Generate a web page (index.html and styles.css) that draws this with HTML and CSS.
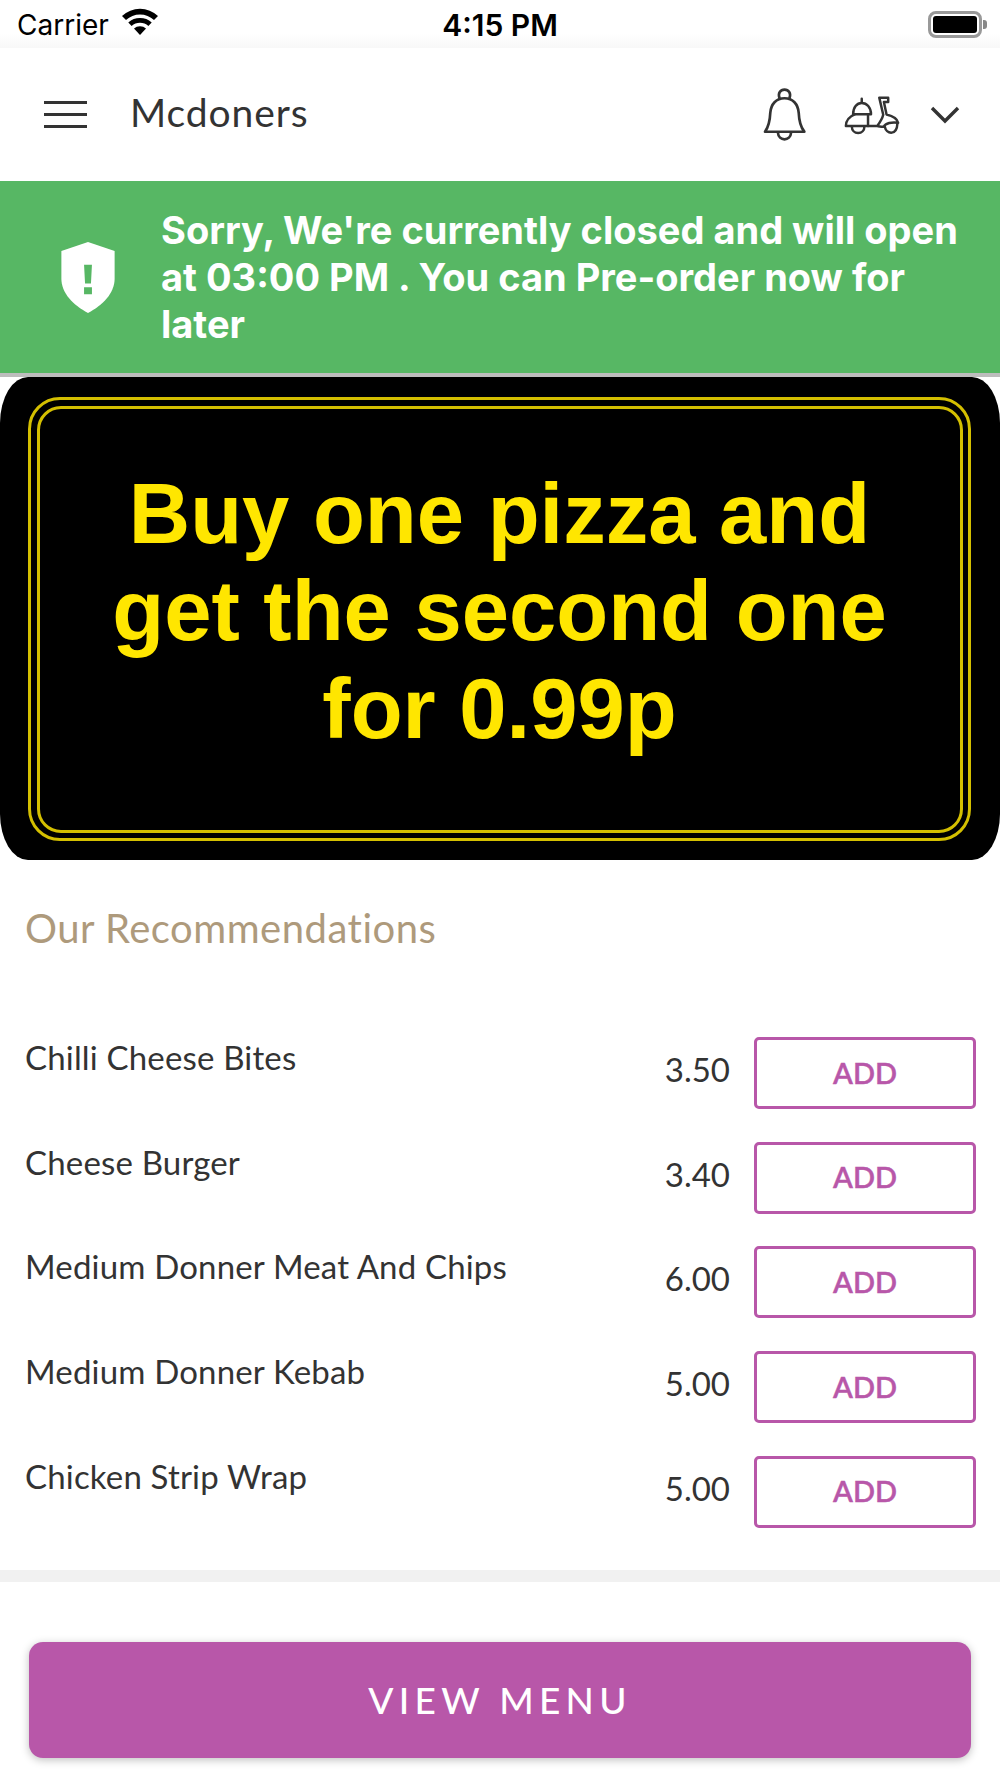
FILE: index.html
```html
<!DOCTYPE html>
<html lang="en">
<head>
<meta charset="utf-8">
<title>Mcdoners</title>
<link rel="stylesheet" href="styles.css">
</head>
<body>
<div class="app">
  <div class="status">
    <div class="status-left">
      <span class="carrier">Carrier</span>
      <svg class="wifi" viewBox="0 0 38 28"><path d="M19 27 13 20.5a9 9 0 0 1 12 0Z"/><path d="M10.6 18 7.3 14.4a17.500 17.500 0 0 1 23.400 0L27.400 18a12.500 12.500 0 0 0-16.800 0Z"/><path d="M5 12 1 8a26 26 0 0 1 36 0l-4 4a20.500 20.500 0 0 0-28 0Z"/></svg>
    </div>
    <span class="time">4:15 PM</span>
    <div class="status-right">
      <span class="battery"><span class="battery-fill"></span></span>
      <span class="battery-nub"></span>
    </div>
  </div>

  <header class="nav">
    <div class="burger"><span></span><span></span><span></span></div>
    <div class="title">Mcdoners</div>
    <svg class="bell" viewBox="190 258 130 164" fill="none" stroke="#333" stroke-width="8" stroke-linejoin="round" stroke-linecap="round">
      <path d="M196 392H315C302 376 299 358 298 335 296 308 280 291 255 291 230 291 214 308 212 335 211 358 208 376 196 392Z"/>
      <path d="M240 291C234 275 243 265 255 265 267 265 276 275 270 291"/>
      <path d="M235 394C236 408 245 415 255 415 265 415 274 408 275 394"/>
    </svg>
    <svg class="scooter" viewBox="433 288 168 118" fill="none" stroke="#333" stroke-width="7.500" stroke-linejoin="round" stroke-linecap="round">
      <path d="M460 343C460 322 471 309 486 309 501 309 514 322 514 343Z"/>
      <path d="M486 304V296"/>
      <path d="M466 343C449 350 438 362 438 379H505V343"/>
      <path d="M505 379H533C541 368 548 358 551 345L539 293H566V306H553L561 344C577 348 593 354 596 369 577 366 558 370 552 381 546 381 540 380 533 379"/>
      <path d="M456 380C456 392 464 400 475 400 486 400 494 392 494 380"/>
      <path d="M556 382C558 392 566 399 575 399 586 399 593 391 594 370"/>
    </svg>
    <svg class="chevron" viewBox="0 0 30 19" fill="none" stroke="#333" stroke-width="3.400"><path d="M2 2 15 15 28 2"/></svg>
  </header>

  <section class="alert">
    <svg class="shield" viewBox="0 0 54 72"><path fill="#fff" d="M27 0 54 9V37C54 52 42 64 27 72 12 64 0 52 0 37V9Z"/><path fill="#57b764" d="M23 23H31L30 42H24ZM23 46H31V53H23Z"/></svg>
    <p class="alert-text">Sorry, We're currently closed and will open at 03:00 PM . You can Pre-order now for later</p>
  </section>

  <section class="promo">
    <div class="promo-line-outer">
      <div class="promo-line-inner">
        <p class="promo-text">Buy one pizza and<br>get the second one<br>for 0.99p</p>
      </div>
    </div>
  </section>

  <section class="recs">
    <h2 class="recs-title">Our Recommendations</h2>
    <div class="row"><span class="item-name">Chilli Cheese Bites</span><span class="item-price">3.50</span><span class="add">ADD</span></div>
    <div class="row"><span class="item-name">Cheese Burger</span><span class="item-price">3.40</span><span class="add">ADD</span></div>
    <div class="row"><span class="item-name">Medium Donner Meat And Chips</span><span class="item-price">6.00</span><span class="add">ADD</span></div>
    <div class="row"><span class="item-name">Medium Donner Kebab</span><span class="item-price">5.00</span><span class="add">ADD</span></div>
    <div class="row"><span class="item-name">Chicken Strip Wrap</span><span class="item-price">5.00</span><span class="add">ADD</span></div>
  </section>

  <div class="divider"></div>

  <div class="cta-wrap"><div class="cta">VIEW MENU</div></div>
</div>
</body>
</html>
```
FILE: styles.css
```css
* { box-sizing: border-box; }
html, body { margin: 0; padding: 0; background: #fff; }
.app { width: 1000px; height: 1778px; overflow: hidden; font-family: Lato, "Open Sans", sans-serif; color: #333; }

.status {
  height: 48px;
  display: grid;
  grid-template-columns: 1fr auto 1fr;
  align-items: center;
  padding: 2px 13px 0 17px;
  background: linear-gradient(#fff 70%, #f8f8f8);
  font-family: Inter, Roboto, sans-serif;
  color: #000;
}
.status-left { display: flex; align-items: center; gap: 12px; }
.carrier { font-size: 28px; font-weight: 400; }
.wifi { width: 38px; height: 28px; margin-top: -6px; }
.time { font-size: 30px; font-weight: 600; position: relative; left: -2px; }
.status-right { display: flex; align-items: center; justify-content: flex-end; gap: 1px; margin-top: -2px; }
.battery { width: 54px; height: 27px; border: 3px solid #999; border-radius: 8px; padding: 2px; display: block; }
.battery-fill { display: block; height: 100%; background: #000; border-radius: 3px; }
.battery-nub { width: 4px; height: 9px; background: #888; border-radius: 0 3px 3px 0; }

.nav { height: 133px; display: flex; align-items: center; padding: 0 40px 0 44px; }
.burger { width: 43px; display: flex; flex-direction: column; gap: 8.500px; }
.burger span { height: 3.500px; background: #333; display: block; }
.title { font-size: 39px; letter-spacing: 0.9px; margin-left: 43px; margin-top: -6px; flex: 1; }
.bell { width: 43px; height: 55px; margin-right: 38px; }
.scooter { width: 56px; height: 39px; margin-right: 30px; margin-top: 2px; }
.chevron { width: 30px; height: 19px; margin-top: 1px; }

.alert {
  height: 192px;
  background: #57b764;
  box-shadow: 0 4px 0 #bdbdbd;
  display: flex;
  align-items: center;
  padding-left: 61px;
  position: relative;
  color: #fff;
}
.shield { width: 54px; height: 71px; flex: none; margin-top: 1px; }
.alert-text {
  margin: 0 0 0 46px;
  font-family: Inter, Roboto, sans-serif;
  font-size: 38px;
  line-height: 47px;
  font-weight: 700;
  width: 825px;
}

.promo {
  margin-top: 4px;
  height: 483px;
  background: #000;
  border-radius: 28px / 46px;
  padding: 20px 29px 19px 28px;
}
.promo-line-outer { height: 100%; border: 3px solid #d4bf00; border-radius: 32px; padding: 5.500px; filter: blur(0.7px); }
.promo-line-inner { height: 100%; border: 3px solid #d4bf00; border-radius: 24px; display: flex; align-items: center; justify-content: center; }
.promo-text {
  margin: -16px 0 0;
  font-family: "Liberation Sans", Arial, sans-serif;
  font-weight: 700;
  font-size: 85px;
  line-height: 97.500px;
  text-align: center;
  color: #ffe600;
  filter: blur(0.5px);
}

.recs { padding: 45px 25px 0; height: 710px; }
.recs-title { margin: 0 0 86px; font-size: 40px; letter-spacing: 0.5px; line-height: 46px; font-weight: 400; color: #ae9a7c; }
.row { display: flex; height: 72px; margin-bottom: 32.700px; }
.item-name { flex: 1; font-size: 33px; letter-spacing: 0.17px; line-height: 40px; }
.item-price { font-size: 33px; line-height: 65px; margin-right: 24px; }
.add {
  width: 222px;
  height: 72px;
  margin-right: -1px;
  border: 3px solid #b857a9;
  border-radius: 5px;
  color: #b857a9;
  font-size: 29px;
  font-weight: 600;
  -webkit-text-stroke: 0.4px #b857a9;
  padding-bottom: 2px;
  display: flex;
  align-items: center;
  justify-content: center;
}

.divider { height: 12px; background: #f1f1f1; }
.cta-wrap { padding: 60px 29px 0; }
.cta {
  height: 116px;
  background: #b857a9;
  border-radius: 14px;
  box-shadow: 0 2px 8px rgba(0, 0, 0, 0.25);
  color: #fff;
  font-size: 37px;
  font-weight: 500;
  letter-spacing: 5.300px;
  padding-bottom: 2px;
  display: flex;
  align-items: center;
  justify-content: center;
}
```
